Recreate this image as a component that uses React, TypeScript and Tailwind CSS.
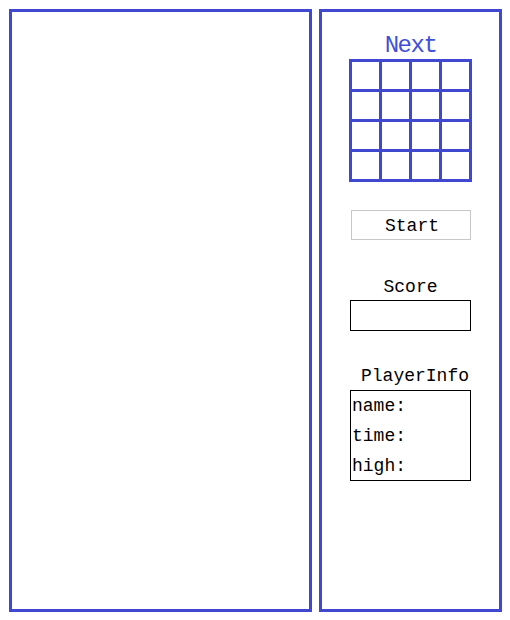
export default function App() {
  const cells = Array.from({ length: 16 })
  const mono = { fontFamily: '"Liberation Mono", monospace' }

  return (
    <div className="flex gap-[7px] pl-[9px] pt-[9px] bg-white w-[510px] h-[620px]" style={mono}>
      {/* board */}
      <div className="w-[303px] h-[603px] border-[3px] border-[#4048cf]" />

      {/* side panel */}
      <div className="w-[183px] h-[603px] border-[3px] border-[#4048cf] flex flex-col items-center">
        <div className="mt-[22px] text-[24px] leading-[24px] tracking-[-1.5px] text-[#4050d8]">
          Next
        </div>
        <div className="mt-[1px] grid grid-cols-4 gap-[3px] border-[3px] border-[#4048cf] bg-[#4048cf]">
          {cells.map((_, i) => (
            <div key={i} className="w-[27px] h-[27px] bg-white" />
          ))}
        </div>

        <button className="mt-[28px] w-[120px] h-[30px] border border-[#c8c8c8] bg-white text-[18px] leading-[30px] text-black pl-[3px]">
          Start
        </button>

        <div className="mt-[37px] text-[18px] leading-[20px] text-black">Score</div>
        <div className="mt-[3px] w-[121px] h-[31px] border border-black" />

        <div className="mt-[35px] w-[121px] pl-[11px] text-[18px] leading-[20px] text-black">
          PlayerInfo
        </div>
        <div className="mt-[4px] w-[121px] h-[91px] border border-black pl-[1px] text-[18px] leading-[30px] text-black">
          <div>name:</div>
          <div>time:</div>
          <div>high:</div>
        </div>
      </div>
    </div>
  )
}
